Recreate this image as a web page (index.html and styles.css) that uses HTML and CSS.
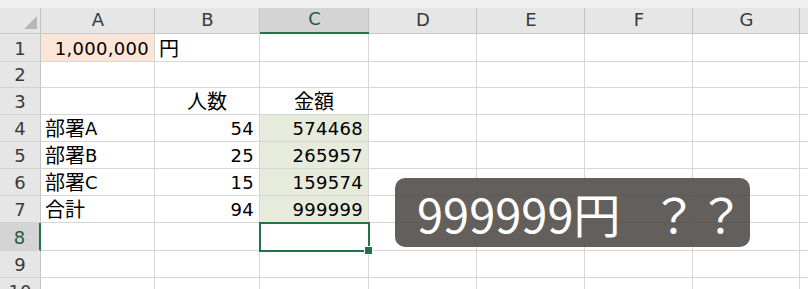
FILE: index.html
```
<!DOCTYPE html>
<html lang="ja">
<head>
<meta charset="utf-8">
<link rel="stylesheet" href="styles.css">
</head>
<body>
<div class="wrap">
  <div class="sheet">
    <div class="hd corner"><span class="tri"></span></div>
    <div class="hd col">A</div>
    <div class="hd col">B</div>
    <div class="hd col sel-col">C</div>
    <div class="hd col">D</div>
    <div class="hd col">E</div>
    <div class="hd col">F</div>
    <div class="hd col">G</div>
    <div class="hd col last"></div>

    <div class="rh">1</div>
    <div class="c r peach">1,000,000</div><div class="c"><span class="jp">円</span></div><div class="c"></div><div class="c"></div><div class="c"></div><div class="c"></div><div class="c"></div><div class="c"></div>

    <div class="rh">2</div>
    <div class="c"></div><div class="c"></div><div class="c"></div><div class="c"></div><div class="c"></div><div class="c"></div><div class="c"></div><div class="c"></div>

    <div class="rh">3</div>
    <div class="c"></div><div class="c ctr"><span class="jp">人数</span></div><div class="c ctr"><span class="jp">金額</span></div><div class="c"></div><div class="c"></div><div class="c"></div><div class="c"></div><div class="c"></div>

    <div class="rh">4</div>
    <div class="c"><span class="jp">部署</span>A</div><div class="c r">54</div><div class="c r green">574468</div><div class="c"></div><div class="c"></div><div class="c"></div><div class="c"></div><div class="c"></div>

    <div class="rh">5</div>
    <div class="c"><span class="jp">部署</span>B</div><div class="c r">25</div><div class="c r green">265957</div><div class="c"></div><div class="c"></div><div class="c"></div><div class="c"></div><div class="c"></div>

    <div class="rh">6</div>
    <div class="c"><span class="jp">部署</span>C</div><div class="c r">15</div><div class="c r green">159574</div><div class="c"></div><div class="c"></div><div class="c"></div><div class="c"></div><div class="c"></div>

    <div class="rh">7</div>
    <div class="c"><span class="jp">合計</span></div><div class="c r">94</div><div class="c r green">999999</div><div class="c"></div><div class="c"></div><div class="c"></div><div class="c"></div><div class="c"></div>

    <div class="rh sel-row">8</div>
    <div class="c"></div><div class="c"></div><div class="c active"><span class="handle"></span></div><div class="c"></div><div class="c"></div><div class="c"></div><div class="c"></div><div class="c"></div>

    <div class="rh">9</div>
    <div class="c"></div><div class="c"></div><div class="c"></div><div class="c"></div><div class="c"></div><div class="c"></div><div class="c"></div><div class="c"></div>

    <div class="rh">10</div>
    <div class="c"></div><div class="c"></div><div class="c"></div><div class="c"></div><div class="c"></div><div class="c"></div><div class="c"></div><div class="c"></div>
  </div>
  <div class="bubble">999999円<span class="q">？？</span></div>
</div>
</body>
</html>
```

FILE: styles.css
```
html, body {
  margin: 0;
  padding: 0;
  background: #ffffff;
  overflow: hidden;
}

.wrap {
  position: relative;
  width: 808px;
  height: 289px;
  overflow: hidden;
}

.sheet {
  display: grid;
  grid-template-columns: 41px 114px 105px 109px 108px 108px 108px 107px 1fr;
  grid-template-rows: 34px 28px 26px 27px 27px 27px 27px 27px 28px 27px 27px;
  font-family: "DejaVu Sans", "Noto Sans CJK JP", sans-serif;
  font-size: 18px;
  color: #000;
}

.jp {
  font-family: "Noto Sans CJK JP", sans-serif;
  font-size: 20px;
  line-height: 1;
  margin-bottom: 1px;
}

.hd {
  background: linear-gradient(#f0f0f0 0, #f0f0f0 8px, #e6e6e6 8px);
  border-bottom: 1px solid #c8c8c8;
  box-sizing: border-box;
  position: relative;
  display: flex;
  align-items: flex-end;
  justify-content: center;
  padding-bottom: 3px;
  font-size: 18px;
  color: #3a3a3a;
}

.hd::after {
  content: "";
  position: absolute;
  right: 0;
  top: 8px;
  bottom: 0;
  width: 1px;
  background: #c4c4c4;
}

.hd.last::after { display: none; }

.corner .tri {
  position: absolute;
  right: 4px;
  bottom: 4px;
  width: 0;
  height: 0;
  border-left: 13px solid transparent;
  border-bottom: 13px solid #b6b6b6;
}

.sel-col {
  background: linear-gradient(#f0f0f0 0, #f0f0f0 8px, #d4d4d4 8px);
  border-bottom: 2px solid #217346;
  color: #2c5a3c;
}

.rh {
  background: #e6e6e6;
  border-right: 1px solid #c4c4c4;
  border-bottom: 1px solid #d2d2d2;
  box-sizing: border-box;
  display: flex;
  align-items: flex-end;
  justify-content: center;
  padding-bottom: 2px;
  font-size: 18px;
  color: #3a3a3a;
}

.sel-row {
  background: #d4d4d4;
  border-right: 2px solid #217346;
  color: #2c5a3c;
}

.c {
  border-right: 1px solid #d6d6d6;
  border-bottom: 1px solid #d6d6d6;
  box-sizing: border-box;
  display: flex;
  align-items: flex-end;
  padding: 0 4px 2px 4px;
  white-space: nowrap;
  position: relative;
}

.c.r { justify-content: flex-end; padding-right: 5px; letter-spacing: 0.3px; }
.c.ctr { justify-content: center; }

.peach { background: #fce4d6; padding-right: 7px; }
.green { background: #e6ebdb; }

.active {
  outline: 2px solid #217346;
  outline-offset: -1px;
  z-index: 2;
}

.handle {
  position: absolute;
  right: -5px;
  bottom: -5px;
  width: 7px;
  height: 7px;
  background: #217346;
  border: 1px solid #ffffff;
}

.bubble {
  position: absolute;
  left: 395px;
  top: 178px;
  width: 355px;
  height: 69px;
  box-sizing: border-box;
  border-radius: 10px;
  background: rgba(82, 78, 74, 0.9);
  color: #ffffff;
  font-family: "Noto Sans CJK JP", "Noto Sans", sans-serif;
  font-size: 47px;
  line-height: 69px;
  padding-left: 22px;
  white-space: nowrap;
  z-index: 5;
}

.bubble .q {
  margin-left: 30px;
}
```
